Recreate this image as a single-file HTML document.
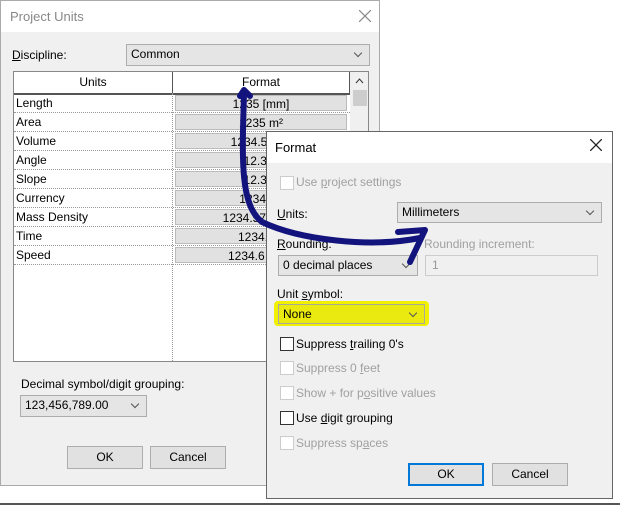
<!DOCTYPE html><html><head><style>
body{margin:0;width:620px;height:506px;background:#fff;position:relative;overflow:hidden;font-family:"Liberation Sans",sans-serif;font-size:12px;color:#000}
.a{position:absolute}
.combo{position:absolute;background:#e5e5e5;border:1px solid #adadad;box-sizing:border-box;padding-left:4px;line-height:19px}
.combo:after{content:"";position:absolute;right:8px;top:5px;width:5px;height:5px;border-right:1px solid #555;border-bottom:1px solid #555;transform:rotate(45deg)}
.btn{position:absolute;background:#e1e1e1;border:1px solid #adadad;box-sizing:border-box;text-align:center;line-height:21px}
.row{position:absolute;left:14px;width:336px;height:18px;border-bottom:1px dotted #999;line-height:18px}
.row span{position:absolute;left:2px}
.row i{position:absolute;left:161px;width:172px;height:16px;top:1px;background:#e1e1e1;border:1px solid #bbb;font-style:normal;text-align:center;line-height:16px;box-sizing:border-box}
.cb{position:absolute;left:280px;width:12px;height:12px;border:1px solid #333;background:#fff}
.cb.d{border-color:#ccc}
.lb{position:absolute;left:296px}
.g{color:#a0a0a0}
</style></head><body>
<div class="a" style="left:0;top:0;width:380px;height:486px;background:#f0f0f0;border:1px solid #aaa;box-sizing:border-box"></div>
<div class="a" style="left:1px;top:1px;width:378px;height:31px;background:#fff"></div>
<div class="a g" style="left:10px;top:9px;font-size:13px;color:#888">Project Units</div>
<svg class="a" style="left:359px;top:10px" width="12" height="12"><path d="M0 0L12 12M12 0L0 12" stroke="#888" stroke-width="1.2"/></svg>
<div class="a" style="left:12px;top:48px"><u>D</u>iscipline:</div>
<div class="combo" style="left:126px;top:44px;width:244px;height:22px">Common</div>
<div class="a" style="left:13px;top:71px;width:356px;height:291px;background:#fff;border:1px solid #888;box-sizing:border-box"></div>
<div class="a" style="left:14px;top:72px;width:158px;height:21px;border-right:1px solid #555;border-bottom:2px solid #555;text-align:center;line-height:21px">Units</div>
<div class="a" style="left:173px;top:72px;width:176px;height:21px;border-bottom:2px solid #555;border-right:1px solid #555;text-align:center;line-height:21px">Format</div>
<div class="a" style="left:350px;top:72px;width:18px;height:289px;background:#f0f0f0"></div>
<div class="a" style="left:353px;top:90px;width:14px;height:16px;background:#cdcdcd"></div>
<svg class="a" style="left:355px;top:78px" width="9" height="6"><path d="M1 5L4.5 1L8 5" fill="none" stroke="#333"/></svg>
<div class="a" style="left:172px;top:93px;height:268px;border-left:1px dotted #999"></div>
<div class="row" style="top:94px"><span>Length</span><i>1235 [mm]</i></div>
<div class="row" style="top:113px"><span>Area</span><i>1235 m²</i></div>
<div class="row" style="top:132px"><span>Volume</span><i>1234.57 m³</i></div>
<div class="row" style="top:151px"><span>Angle</span><i>12.35°</i></div>
<div class="row" style="top:170px"><span>Slope</span><i>12.35°</i></div>
<div class="row" style="top:189px"><span>Currency</span><i>1234.57</i></div>
<div class="row" style="top:208px"><span>Mass Density</span><i>1234.57 kg/m³</i></div>
<div class="row" style="top:227px"><span>Time</span><i>1234.6 s</i></div>
<div class="row" style="top:246px"><span>Speed</span><i>1234.6 km/h</i></div>
<div class="a" style="left:21px;top:377px">Decimal symbol/digit grouping:</div>
<div class="combo" style="left:20px;top:395px;width:127px;height:22px">123,456,789.00</div>
<div class="btn" style="left:67px;top:446px;width:76px;height:23px">OK</div>
<div class="btn" style="left:150px;top:446px;width:76px;height:23px">Cancel</div>
<div class="a" style="left:0;top:503px;width:620px;height:2px;background:#555"></div>

<div class="a" style="left:266px;top:131px;width:347px;height:368px;background:#f0f0f0;border:1px solid #666;box-sizing:border-box"></div>
<div class="a" style="left:267px;top:132px;width:345px;height:31px;background:#fff"></div>
<div class="a" style="left:275px;top:140px;font-size:13px">Format</div>
<svg class="a" style="left:590px;top:139px" width="12" height="12"><path d="M0 0L12 12M12 0L0 12" stroke="#222" stroke-width="1.3"/></svg>
<div class="cb d" style="top:176px"></div><div class="lb g" style="top:175px">Use <u>p</u>roject settings</div>
<div class="a" style="left:277px;top:207px"><u>U</u>nits:</div>
<div class="combo" style="left:397px;top:202px;width:205px;height:21px">Millimeters</div>
<div class="a" style="left:277px;top:237px"><u>R</u>ounding:</div>
<div class="a g" style="left:424px;top:237px">Rounding increment:</div>
<div class="combo" style="left:278px;top:255px;width:140px;height:21px">0 decimal places</div>
<div class="a" style="left:425px;top:255px;width:173px;height:21px;border:1px solid #ccc;box-sizing:border-box;color:#999;padding-left:6px;line-height:19px">1</div>
<div class="a" style="left:277px;top:287px">Unit <u>s</u>ymbol:</div>
<div class="a" style="left:274px;top:301px;width:155px;height:25px;background:#f0f000;border-radius:4px"></div>
<div class="combo" style="left:278px;top:304px;width:147px;height:20px;background:#eaea10;border-color:#aa9">None</div>
<div class="cb" style="top:337px"></div><div class="lb" style="top:337px">Suppress <u>t</u>railing 0's</div>
<div class="cb d" style="top:361px"></div><div class="lb g" style="top:361px">Suppress 0 <u>f</u>eet</div>
<div class="cb d" style="top:386px"></div><div class="lb g" style="top:386px">Show + for p<u>o</u>sitive values</div>
<div class="cb" style="top:411px"></div><div class="lb" style="top:411px">Use <u>d</u>igit grouping</div>
<div class="cb d" style="top:436px"></div><div class="lb g" style="top:436px">Suppress sp<u>a</u>ces</div>
<div class="btn" style="left:408px;top:463px;width:76px;height:23px;border:2px solid #0078d7;line-height:19px">OK</div>
<div class="btn" style="left:492px;top:463px;width:76px;height:23px">Cancel</div>

<svg class="a" style="left:0;top:0" width="620" height="506"><g fill="none" stroke="#13137e" stroke-width="6" stroke-linecap="round" stroke-linejoin="round">
<path d="M244 94 C242 160,240 205,262 222 C300 240,370 248,420 238"/>
<path d="M398 232 L425 230 L410 262"/>
<path d="M240 96 L244 90 L250 96"/></g></svg>
</body></html>
